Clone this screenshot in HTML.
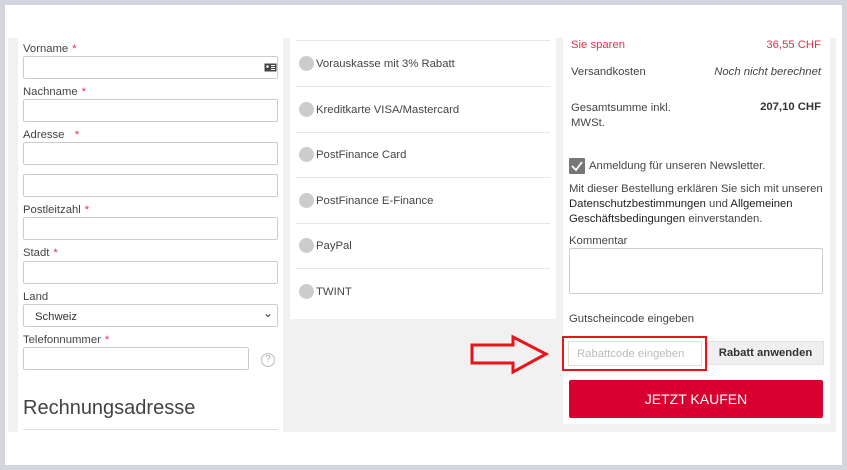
<!DOCTYPE html>
<html><head><meta charset="utf-8"><style>
*{box-sizing:border-box;margin:0;padding:0}
body{width:847px;height:470px;background:#d3d6de;font-family:"Liberation Sans",sans-serif;font-size:11.3px;color:#333;position:relative;overflow:hidden}
.a{position:absolute}
.t{padding-top:1px}
.frame{left:5px;top:5px;width:837px;height:460px;background:#fff}
.bg{left:8px;top:38px;width:828px;height:394px;background:#f1f1f1}
.col{background:#fff}
.lbl{color:#444;padding-top:1px}
.lbl b{color:#e0314b;font-weight:normal;margin-left:4px}
.in{border:1px solid #ccc;background:#fff;height:23px;border-radius:2px}
.pm{left:299px;color:#444;display:flex;align-items:center;padding-top:1px}
.pm i{width:15px;height:15px;border-radius:50%;background:#ccc;display:inline-block;margin-right:2px}
.hr{height:1px;background:#e6e6e6}
</style></head><body>
<div class="a frame"></div>
<div class="a bg"></div>
<!-- col1 -->
<div class="a col" style="left:18px;top:38px;width:265px;height:394px"></div>
<div class="a lbl" style="left:23px;top:42px">Vorname<b>*</b></div>
<div class="a in" style="left:23px;top:56px;width:255px"></div>
<svg class="a" style="left:264px;top:63px" width="13" height="9"><rect x="0.5" y="0.5" width="12" height="8" fill="#444"/><rect x="7" y="2" width="4" height="1" fill="#fff"/><rect x="7" y="4" width="4" height="1" fill="#fff"/><rect x="7" y="6" width="4" height="1" fill="#fff"/><circle cx="3.5" cy="3.5" r="1.3" fill="#fff"/></svg>
<div class="a lbl" style="left:23px;top:85px">Nachname<b>*</b></div>
<div class="a in" style="left:23px;top:99px;width:255px"></div>
<div class="a lbl" style="left:23px;top:128px">Adresse &nbsp;<b>*</b></div>
<div class="a in" style="left:23px;top:142px;width:255px"></div>
<div class="a in" style="left:23px;top:174px;width:255px"></div>
<div class="a lbl" style="left:23px;top:203px">Postleitzahl<b>*</b></div>
<div class="a in" style="left:23px;top:217px;width:255px"></div>
<div class="a lbl" style="left:23px;top:246px">Stadt<b>*</b></div>
<div class="a in" style="left:23px;top:261px;width:255px"></div>
<div class="a lbl" style="left:23px;top:290px">Land</div>
<div class="a in" style="left:23px;top:304px;width:255px;padding:6px 0 0 11px;color:#333">Schweiz<span style="position:absolute;right:4px;top:1px;font-size:12px">&#8964;</span></div>
<div class="a lbl" style="left:23px;top:333px">Telefonnummer<b>*</b></div>
<div class="a in" style="left:23px;top:347px;width:226px"></div>
<div class="a" style="left:261px;top:353px;width:14px;height:14px;border:1px solid #bbb;border-radius:50%;color:#aaa;font-size:10px;text-align:center;line-height:12px">?</div>
<div class="a" style="left:23px;top:397px;font-size:20px;color:#444">Rechnungsadresse</div>
<div class="a hr" style="left:23px;top:429px;width:255px;background:#ddd"></div>
<!-- col2 -->
<div class="a col" style="left:290px;top:38px;width:266px;height:281px"></div>
<div class="a hr" style="left:296px;top:40px;width:254px"></div>
<div class="a pm" style="top:55px"><i></i>Vorauskasse mit 3% Rabatt</div>
<div class="a hr" style="left:296px;top:86px;width:254px"></div>
<div class="a pm" style="top:101px"><i></i>Kreditkarte VISA/Mastercard</div>
<div class="a hr" style="left:296px;top:132px;width:254px"></div>
<div class="a pm" style="top:146px"><i></i>PostFinance Card</div>
<div class="a hr" style="left:296px;top:177px;width:254px"></div>
<div class="a pm" style="top:192px"><i></i>PostFinance E-Finance</div>
<div class="a hr" style="left:296px;top:223px;width:254px"></div>
<div class="a pm" style="top:237px"><i></i>PayPal</div>
<div class="a hr" style="left:296px;top:268px;width:254px"></div>
<div class="a pm" style="top:283px"><i></i>TWINT</div>
<!-- arrow -->
<svg class="a" style="left:470px;top:334px" width="80" height="42"><path d="M2 11 H43 V3 L76 20 L43 38 V29 H2 Z" fill="none" stroke="#e8141c" stroke-width="3"/></svg>
<!-- col3 -->
<div class="a col" style="left:563px;top:38px;width:267px;height:386px"></div>
<div class="a t" style="left:571px;top:38px;color:#e0314b">Sie sparen</div>
<div class="a t" style="right:26px;top:38px;color:#e0314b">36,55 CHF</div>
<div class="a t" style="left:571px;top:65px;color:#444">Versandkosten</div>
<div class="a t" style="right:26px;top:65px;color:#444;font-style:italic">Noch nicht berechnet</div>
<div class="a t" style="left:571px;top:100px;color:#444;line-height:15px">Gesamtsumme inkl.<br>MWSt.</div>
<div class="a t" style="right:26px;top:100px;color:#333;font-weight:bold">207,10 CHF</div>
<div class="a" style="left:569px;top:158px;width:16px;height:16px;background:#777;border-radius:1px"><svg width="16" height="16"><path d="M3 8 L7 12 L13 4" fill="none" stroke="#fff" stroke-width="1.8"/></svg></div>
<div class="a t" style="left:589px;top:159px;color:#444">Anmeldung für unseren Newsletter.</div>
<div class="a t" style="left:569px;top:181px;color:#444;line-height:15px;width:262px">Mit dieser Bestellung erklären Sie sich mit unseren <span style="color:#222">Datenschutzbestimmungen</span> und <span style="color:#222">Allgemeinen Geschäftsbedingungen</span> einverstanden.</div>
<div class="a t" style="left:569px;top:234px;color:#444">Kommentar</div>
<div class="a in" style="left:569px;top:248px;width:254px;height:46px"></div>
<div class="a t" style="left:569px;top:312px;color:#444">Gutscheincode eingeben</div>
<div class="a" style="left:562px;top:336px;width:145px;height:35px;border:2px solid #e8141c"></div>
<div class="a" style="left:568px;top:341px;width:134px;height:25px;border:1px solid #ddd;color:#bbb;padding:6px 0 0 8px">Rabattcode eingeben</div>
<div class="a" style="left:707px;top:341px;width:117px;height:24px;background:#efefef;border:1px solid #e2e2e2;font-weight:bold;color:#333;text-align:center;line-height:23px">Rabatt anwenden</div>
<div class="a" style="left:569px;top:380px;width:254px;height:38px;background:#d7002e;border-radius:2px;color:#fff;font-size:14px;text-align:center;line-height:39px">JETZT KAUFEN</div>
</body></html>
